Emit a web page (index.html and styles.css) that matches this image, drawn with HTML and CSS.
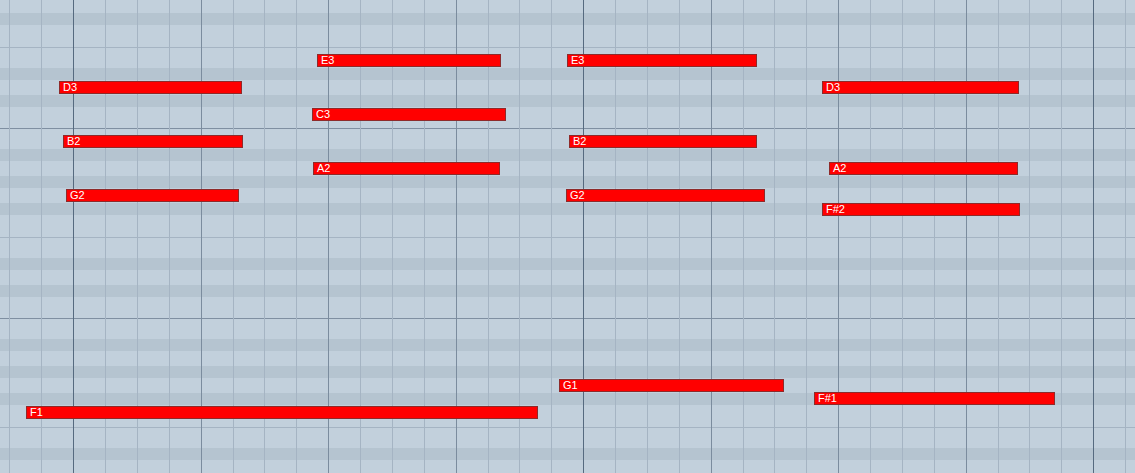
FILE: index.html
```html
<!DOCTYPE html>
<html lang="en">
<head>
  <meta charset="UTF-8">
  <meta name="viewport" content="width=device-width, initial-scale=1.0">
  <title>Piano roll</title>
  <link rel="stylesheet" href="styles.css">
</head>
<body>

<div class="roll">

  <!-- KEY ROWS: three octaves, top to bottom -->
  <div class="keys">
    <div class="key key-b"></div><div class="key key-sharp"></div><div class="key key-a"></div><div class="key key-sharp"></div><div class="key key-g"></div><div class="key key-sharp"></div><div class="key key-f"></div>
    <div class="key key-e"></div><div class="key key-sharp"></div><div class="key key-d"></div><div class="key key-sharp"></div><div class="key key-c"></div>

    <div class="key key-b"></div><div class="key key-sharp"></div><div class="key key-a"></div><div class="key key-sharp"></div><div class="key key-g"></div><div class="key key-sharp"></div><div class="key key-f"></div>
    <div class="key key-e"></div><div class="key key-sharp"></div><div class="key key-d"></div><div class="key key-sharp"></div><div class="key key-c"></div>

    <div class="key key-b"></div><div class="key key-sharp"></div><div class="key key-a"></div><div class="key key-sharp"></div><div class="key key-g"></div><div class="key key-sharp"></div><div class="key key-f"></div>
    <div class="key key-e"></div><div class="key key-sharp"></div><div class="key key-d"></div><div class="key key-sharp"></div><div class="key key-c"></div>
  </div>

  <!-- BARS AND BEATS -->
  <div class="bars">
    <div class="bar"><div class="beat"></div><div class="beat"></div><div class="beat"></div><div class="beat"></div></div>
    <div class="bar major"><div class="beat"></div><div class="beat"></div><div class="beat"></div><div class="beat"></div></div>
    <div class="bar"><div class="beat"></div><div class="beat"></div><div class="beat"></div><div class="beat"></div></div>
    <div class="bar"><div class="beat"></div><div class="beat"></div><div class="beat"></div><div class="beat"></div></div>
    <div class="bar"><div class="beat"></div><div class="beat"></div><div class="beat"></div><div class="beat"></div></div>
    <div class="bar major"><div class="beat"></div><div class="beat"></div><div class="beat"></div><div class="beat"></div></div>
    <div class="bar"><div class="beat"></div><div class="beat"></div><div class="beat"></div><div class="beat"></div></div>
    <div class="bar"><div class="beat"></div><div class="beat"></div><div class="beat"></div><div class="beat"></div></div>
    <div class="bar"><div class="beat"></div><div class="beat"></div><div class="beat"></div><div class="beat"></div></div>
    <div class="bar major"><div class="beat"></div><div class="beat"></div><div class="beat"></div><div class="beat"></div></div>
  </div>

  <!-- NOTES -->
  <div class="note" style="left:317px; top:54px; width:184px">E3</div>
  <div class="note" style="left:567px; top:54px; width:190px">E3</div>
  <div class="note" style="left:59px; top:81px; width:183px">D3</div>
  <div class="note" style="left:822px; top:81px; width:197px">D3</div>
  <div class="note" style="left:312px; top:108px; width:194px">C3</div>
  <div class="note" style="left:63px; top:135px; width:180px">B2</div>
  <div class="note" style="left:569px; top:135px; width:188px">B2</div>
  <div class="note" style="left:313px; top:162px; width:187px">A2</div>
  <div class="note" style="left:829px; top:162px; width:189px">A2</div>
  <div class="note" style="left:66px; top:189px; width:173px">G2</div>
  <div class="note" style="left:566px; top:189px; width:199px">G2</div>
  <div class="note" style="left:822px; top:203px; width:198px">F#2</div>
  <div class="note" style="left:559px; top:379px; width:225px">G1</div>
  <div class="note" style="left:814px; top:392px; width:241px">F#1</div>
  <div class="note" style="left:26px; top:406px; width:512px">F1</div>

</div>

</body>
</html>
```

FILE: styles.css
```css
* {
  margin: 0;
  padding: 0;
  box-sizing: border-box;
}
body {
  background-color: #c2d0dc;
  font-family: "Liberation Sans", Arial, sans-serif;
  overflow: hidden;
}
.roll {
  position: relative;
  width: 100vw;
  height: 100vh;
  overflow: hidden;
  background-color: #c2d0dc;
}

/* rows of the keyboard, one octave = 190px */
.keys {
  display: flex;
  flex-direction: column;
  margin-top: -62px;
}
.key {
  flex: none;
}
.key-sharp {
  height: 12px;
  background-color: #b5c4d0;
}
.key-b {
  height: 21px;
  border-top: 1px solid #7f8fa1; /* octave line */
}
.key-a, .key-g, .key-d {
  height: 15px;
}
.key-f {
  height: 22px;
}
.key-e {
  height: 21px;
  border-top: 1px solid #a5b4c3;
}
.key-c {
  height: 21px;
}

/* vertical grid */
.bars {
  position: absolute;
  top: 0;
  bottom: 0;
  left: -54.375px;
  display: flex;
}
.bar {
  display: flex;
  flex: none;
}
.beat {
  width: 31.875px;
  flex: none;
  border-left: 1px solid #a5b4c3;
}
.bar .beat:first-child {
  border-left-color: #7b8c9e;
}
.bar.major .beat:first-child {
  border-left-color: #566a7f;
}

/* notes */
.note {
  position: absolute;
  height: 13px;
  padding-left: 3px;
  background-color: #ff0000;
  border: 1px solid #8e2a2a;
  color: white;
  font-size: 11px;
  line-height: 11px;
  white-space: nowrap;
  overflow: hidden;
}
```
